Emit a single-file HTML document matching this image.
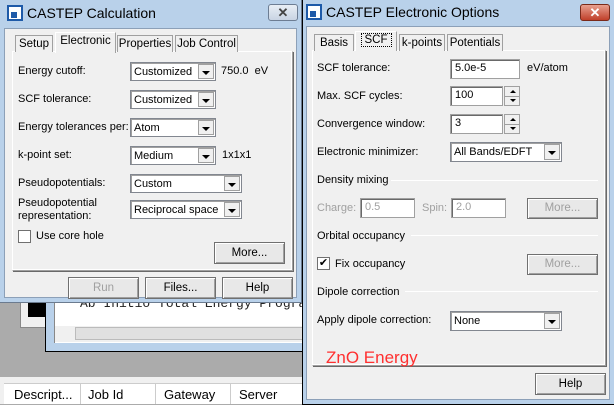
<!DOCTYPE html>
<html><head><meta charset="utf-8"><style>
*{box-sizing:border-box;margin:0;padding:0}
body{width:614px;height:404px;overflow:hidden;background:#ababab;font-family:"Liberation Sans",sans-serif;font-size:11px;color:#000;position:relative}
.a{position:absolute}
.win{position:absolute;background:#b9d1ea;border:1px solid #6b7b8f}
.title{position:absolute;font-size:14px;color:#000}
.ico{position:absolute;width:16px;height:16px;border:2px solid #1e5aa8;background:#fff}
.ico:after{content:"";position:absolute;left:2px;top:5px;width:6px;height:6px;background:#1e5aa8}
.x{position:absolute;width:30px;height:17px;border:1px solid #6d7d93;border-radius:3px;background:linear-gradient(#e8eef5,#c9d4e3);text-align:center;font-size:13px;font-weight:bold;color:#444;line-height:15px}
.x.red{background:linear-gradient(#e8a090,#c0402a);color:#fff;border-color:#7a2a1a}
.face{position:absolute;background:#f0f0f0}
.panel{position:absolute;border:1px solid #a0a0a0;border-top-color:#fff;border-left-color:#fff;box-shadow:inset -1px -1px 0 #fff,1px 1px 0 #696969}
.tab{position:absolute;border:1px solid #a0a0a0;border-bottom:none;background:#f0f0f0;text-align:center;line-height:16px;white-space:nowrap;font-size:11.5px}
.lbl{position:absolute;white-space:nowrap}
.combo{position:absolute;background:#fff;border:1px solid #828790;box-shadow:inset 1px 1px 0 #a0a0a0;white-space:nowrap;overflow:hidden}
.combo span{position:absolute;left:3px;top:3px}
.combo i{position:absolute;right:1px;top:1px;bottom:1px;width:16px;background:#f0f0f0;border:1px solid #a0a0a0}
.combo i:after{content:"";position:absolute;left:3px;top:6px;border-left:4px solid transparent;border-right:4px solid transparent;border-top:4px solid #000}
.edit{position:absolute;background:#fff;border:1px solid #a0a0a0;box-shadow:inset 1px 1px 0 #696969;padding:2px 4px}
.btn{position:absolute;background:#e8e8e8;border:1px solid #707070;box-shadow:inset 1px 1px 0 #fff,inset -1px -1px 0 #a0a0a0;text-align:center;font-size:11.5px}
.dis{color:#a0a0a0}
.grp{position:absolute;height:1px;background:#a0a0a0;border-bottom:1px solid #fff}
.spin{position:absolute;width:16px;background:#f0f0f0;border:1px solid #a0a0a0}
.spin:before{content:"";position:absolute;left:5px;top:3px;border-left:3px solid transparent;border-right:3px solid transparent;border-bottom:3px solid #000}
.spin:after{content:"";position:absolute;left:5px;bottom:3px;border-left:3px solid transparent;border-right:3px solid transparent;border-top:3px solid #000}
.spin b{position:absolute;left:0;right:0;top:9px;height:1px;background:#a0a0a0}
.cb{position:absolute;width:13px;height:13px;border:1px solid #707070;background:#fff}
</style></head><body>

<div class="a" style="left:20px;top:300px;width:40px;height:28px;background:#f0f0f0;border:1px solid #888"></div>
<div class="a" style="left:28px;top:302px;width:18px;height:15px;background:#000"></div>
<div class="a" style="left:45px;top:296px;width:260px;height:56px;background:#b9d1ea;border:1px solid #000"></div>
<div class="a" style="left:54px;top:296px;width:251px;height:47px;background:#fff;border-left:1px solid #888"></div>
<div class="lbl" style="left:80px;top:296px;font-family:'Liberation Mono',monospace;font-size:13px;color:#222">Ab Initio Total Energy Program</div>
<div class="a" style="left:55px;top:326px;width:250px;height:16px;background:#f0f0f0"></div>
<div class="a" style="left:75px;top:327px;width:230px;height:13px;background:#e0e0e0;border:1px solid #bbb"></div>
<div class="a" style="left:0;top:377px;width:302px;height:27px;background:#f0f0f0"></div>
<div class="a" style="left:4px;top:383px;width:298px;height:21px;background:#fff;border-top:1px solid #ccc"></div>
<div class="lbl" style="left:14px;top:387px;font-size:13px">Descript...</div>
<div class="a" style="left:80px;top:383px;width:1px;height:21px;background:#ccc"></div>
<div class="lbl" style="left:88px;top:387px;font-size:13px">Job Id</div>
<div class="a" style="left:155px;top:383px;width:1px;height:21px;background:#ccc"></div>
<div class="lbl" style="left:164px;top:387px;font-size:13px">Gateway</div>
<div class="a" style="left:230px;top:383px;width:1px;height:21px;background:#ccc"></div>
<div class="lbl" style="left:239px;top:387px;font-size:13px">Server</div>

<div class="win" style="left:-1px;top:-1px;width:303px;height:304px"></div>
<div class="ico" style="left:7px;top:5px"></div>
<div class="title" style="left:27px;top:5px">CASTEP Calculation</div>
<div class="x" style="left:268px;top:4px">✕</div>
<div class="face" style="left:4px;top:28px;width:293px;height:270px;border:1px solid #8ca0b8"></div>
<div class="panel" style="left:12px;top:51px;width:281px;height:220px"></div>
<div class="tab" style="left:15px;top:35px;width:38px;height:17px">Setup</div>
<div class="tab" style="left:55px;top:32px;width:61px;height:21px;border-color:#fff #a0a0a0 #a0a0a0 #fff">Electronic</div>
<div class="tab" style="left:117px;top:35px;width:56px;height:17px">Properties</div>
<div class="tab" style="left:175px;top:35px;width:63px;height:17px">Job Control</div>

<div class="lbl" style="left:18px;top:65px">Energy cutoff:</div>
<div class="combo" style="left:130px;top:62px;width:86px;height:19px"><span>Customized</span><i></i></div>
<div class="lbl" style="left:221px;top:65px">750.0&nbsp; eV</div>
<div class="lbl" style="left:18px;top:93px">SCF tolerance:</div>
<div class="combo" style="left:130px;top:90px;width:86px;height:19px"><span>Customized</span><i></i></div>
<div class="lbl" style="left:18px;top:121px">Energy tolerances per:</div>
<div class="combo" style="left:130px;top:118px;width:86px;height:19px"><span>Atom</span><i></i></div>
<div class="lbl" style="left:18px;top:149px">k-point set:</div>
<div class="combo" style="left:130px;top:146px;width:86px;height:19px"><span>Medium</span><i></i></div>
<div class="lbl" style="left:222px;top:149px">1x1x1</div>
<div class="lbl" style="left:18px;top:177px">Pseudopotentials:</div>
<div class="combo" style="left:130px;top:174px;width:112px;height:19px"><span>Custom</span><i></i></div>
<div class="lbl" style="left:18px;top:197px;line-height:13px">Pseudopotential<br>representation:</div>
<div class="combo" style="left:130px;top:200px;width:112px;height:19px"><span>Reciprocal space</span><i></i></div>
<div class="cb" style="left:18px;top:230px"></div>
<div class="lbl" style="left:36px;top:230px">Use core hole</div>
<div class="btn" style="left:214px;top:242px;width:71px;height:22px;line-height:20px">More...</div>
<div class="btn dis" style="left:68px;top:277px;width:71px;height:22px;line-height:20px">Run</div>
<div class="btn" style="left:145px;top:277px;width:71px;height:22px;line-height:20px">Files...</div>
<div class="btn" style="left:222px;top:277px;width:71px;height:22px;line-height:20px">Help</div>

<div class="win" style="left:302px;top:-1px;width:313px;height:406px;border-color:#000"></div>
<div class="ico" style="left:306px;top:4px"></div>
<div class="title" style="left:326px;top:4px">CASTEP Electronic Options</div>
<div class="x red" style="left:580px;top:4px">✕</div>
<div class="face" style="left:306px;top:26px;width:304px;height:374px;border:1px solid #8ca0b8"></div>
<div class="panel" style="left:312px;top:50px;width:294px;height:316px"></div>
<div class="tab" style="left:314px;top:34px;width:40px;height:17px">Basis</div>
<div class="tab" style="left:355px;top:31px;width:42px;height:20px;border-color:#fff #a0a0a0 #a0a0a0 #fff"><span style="outline:1px dotted #000;padding:0 3px">SCF</span></div>
<div class="tab" style="left:399px;top:34px;width:46px;height:17px">k-points</div>
<div class="tab" style="left:447px;top:34px;width:56px;height:17px">Potentials</div>

<div class="lbl" style="left:317px;top:62px">SCF tolerance:</div>
<div class="edit" style="left:450px;top:59px;width:70px;height:20px">5.0e-5</div>
<div class="lbl" style="left:527px;top:62px">eV/atom</div>
<div class="lbl" style="left:317px;top:90px">Max. SCF cycles:</div>
<div class="edit" style="left:450px;top:86px;width:53px;height:20px">100</div>
<div class="spin" style="left:504px;top:86px;height:20px"><b></b></div>
<div class="lbl" style="left:317px;top:118px">Convergence window:</div>
<div class="edit" style="left:450px;top:114px;width:53px;height:20px">3</div>
<div class="spin" style="left:504px;top:114px;height:20px"><b></b></div>
<div class="lbl" style="left:317px;top:146px">Electronic minimizer:</div>
<div class="combo" style="left:450px;top:142px;width:112px;height:20px"><span>All Bands/EDFT</span><i></i></div>
<div class="lbl" style="left:317px;top:174px">Density mixing</div>
<div class="grp" style="left:391px;top:180px;width:207px"></div>
<div class="lbl dis" style="left:317px;top:202px">Charge:</div>
<div class="edit dis" style="left:360px;top:198px;width:55px;height:20px">0.5</div>
<div class="lbl dis" style="left:422px;top:202px">Spin:</div>
<div class="edit dis" style="left:451px;top:198px;width:55px;height:20px">2.0</div>
<div class="btn dis" style="left:527px;top:198px;width:71px;height:21px;line-height:19px">More...</div>
<div class="lbl" style="left:317px;top:230px">Orbital occupancy</div>
<div class="grp" style="left:411px;top:235px;width:187px"></div>
<div class="cb" style="left:317px;top:257px;font-size:11px;line-height:11px;text-align:center">✔</div>
<div class="lbl" style="left:335px;top:258px">Fix occupancy</div>
<div class="btn dis" style="left:527px;top:254px;width:71px;height:21px;line-height:19px">More...</div>
<div class="lbl" style="left:317px;top:286px">Dipole correction</div>
<div class="grp" style="left:405px;top:291px;width:193px"></div>
<div class="lbl" style="left:317px;top:314px">Apply dipole correction:</div>
<div class="combo" style="left:450px;top:311px;width:112px;height:20px"><span>None</span><i></i></div>
<div class="lbl" style="left:326px;top:348px;font-size:17px;color:#ff3030">ZnO Energy</div>
<div class="btn" style="left:535px;top:373px;width:71px;height:22px;line-height:20px">Help</div>
</body></html>
